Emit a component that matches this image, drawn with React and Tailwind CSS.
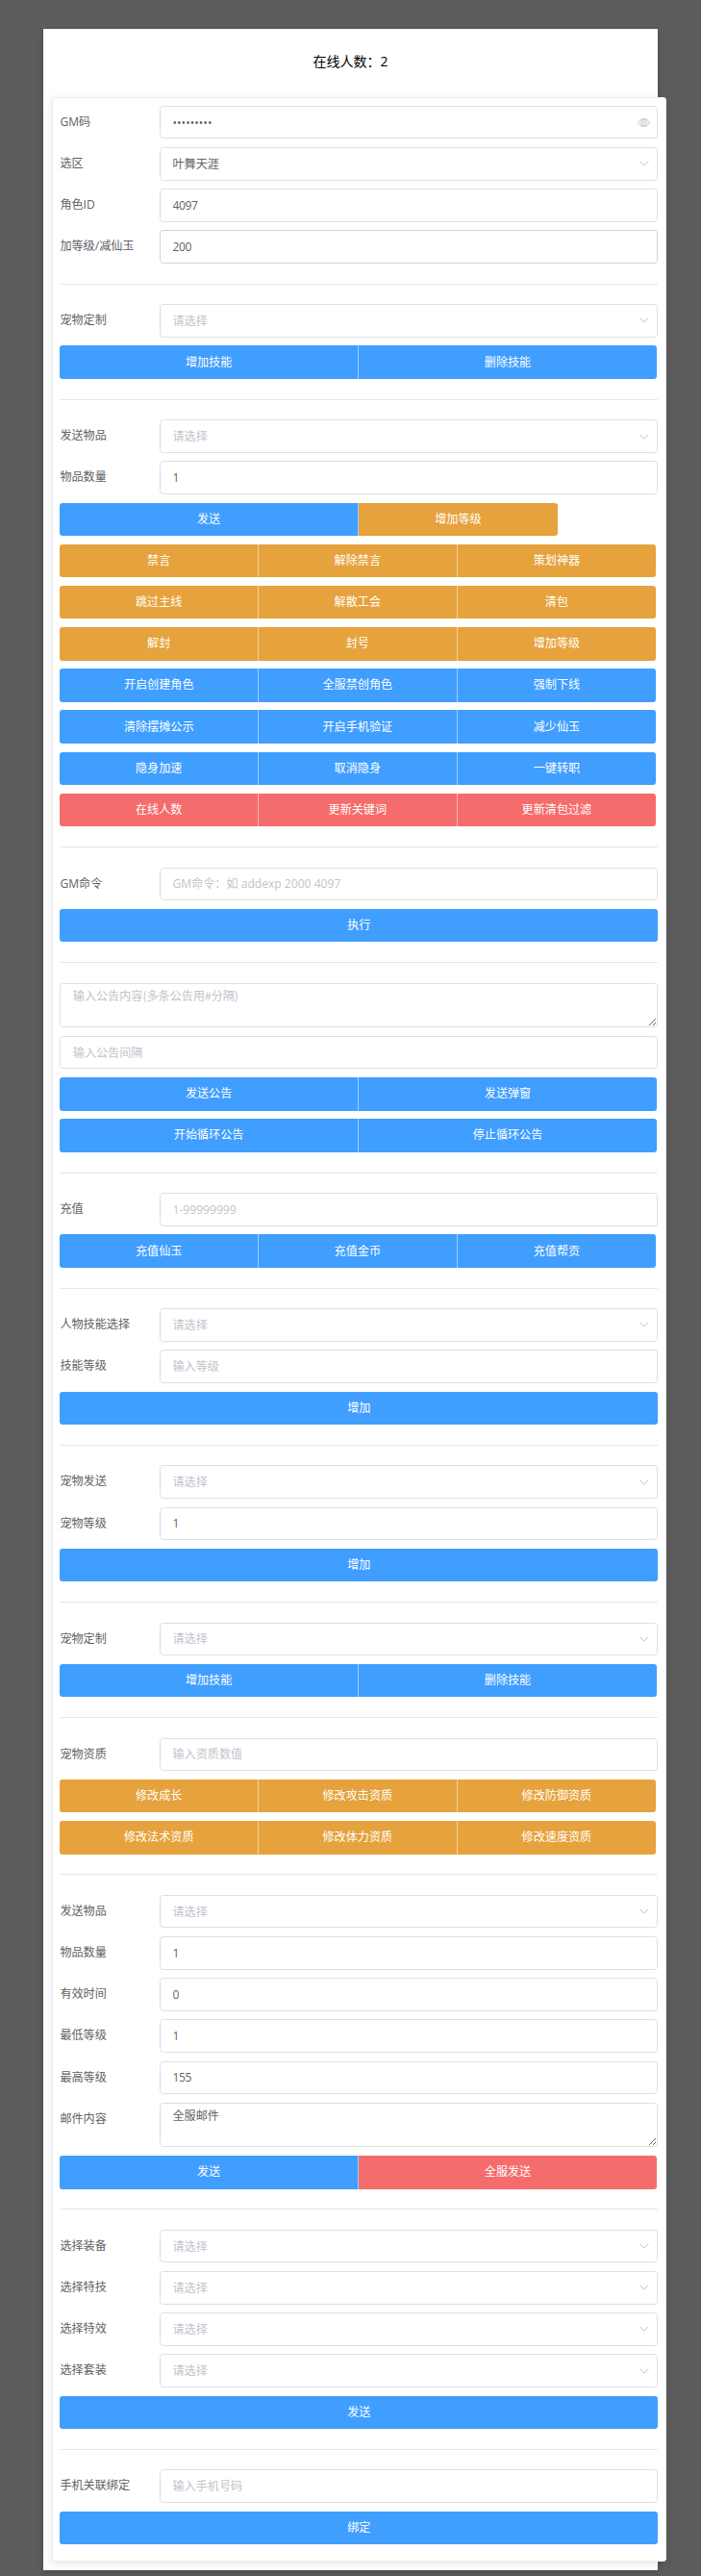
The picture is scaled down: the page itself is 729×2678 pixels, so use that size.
import { useState } from 'react';

const servers = '叶舞天涯';

const sections = [
  [
    { type: 'password', label: 'GM码', value: '123456789' },
    { type: 'select', label: '选区', value: servers },
    { type: 'input', label: '角色ID', value: '4097' },
    { type: 'input', label: '加等级/减仙玉', value: '200', active: true },
  ],
  [
    { type: 'select', label: '宠物定制' },
    { type: 'buttons', color: 'primary', items: ['增加技能', '删除技能'] },
  ],
  [
    { type: 'select', label: '发送物品' },
    { type: 'input', label: '物品数量', value: '1' },
    { type: 'send' },
    { type: 'buttons', color: 'warning', items: ['禁言', '解除禁言', '策划神器'] },
    { type: 'buttons', color: 'warning', items: ['跳过主线', '解散工会', '清包'] },
    { type: 'buttons', color: 'warning', items: ['解封', '封号', '增加等级'] },
    { type: 'buttons', color: 'primary', items: ['开启创建角色', '全服禁创角色', '强制下线'] },
    { type: 'buttons', color: 'primary', items: ['清除摆摊公示', '开启手机验证', '减少仙玉'] },
    { type: 'buttons', color: 'primary', items: ['隐身加速', '取消隐身', '一键转职'] },
    { type: 'buttons', color: 'danger', items: ['在线人数', '更新关键词', '更新清包过滤'] },
  ],
  [
    { type: 'input', label: 'GM命令', placeholder: 'GM命令：如 addexp 2000 4097' },
    { type: 'buttons', color: 'primary', items: ['执行'] },
  ],
  [
    { type: 'textarea', placeholder: '输入公告内容(多条公告用#分隔)' },
    { type: 'input', placeholder: '输入公告间隔' },
    { type: 'buttons', color: 'primary', items: ['发送公告', '发送弹窗'] },
    { type: 'buttons', color: 'primary', items: ['开始循环公告', '停止循环公告'] },
  ],
  [
    { type: 'input', label: '充值', placeholder: '1-99999999' },
    { type: 'buttons', color: 'primary', items: ['充值仙玉', '充值金币', '充值帮贡'] },
  ],
  [
    { type: 'select', label: '人物技能选择' },
    { type: 'input', label: '技能等级', placeholder: '输入等级' },
    { type: 'buttons', color: 'primary', items: ['增加'] },
  ],
  [
    { type: 'select', label: '宠物发送' },
    { type: 'input', label: '宠物等级', value: '1' },
    { type: 'buttons', color: 'primary', items: ['增加'] },
  ],
  [
    { type: 'select', label: '宠物定制' },
    { type: 'buttons', color: 'primary', items: ['增加技能', '删除技能'] },
  ],
  [
    { type: 'input', label: '宠物资质', placeholder: '输入资质数值' },
    { type: 'buttons', color: 'warning', items: ['修改成长', '修改攻击资质', '修改防御资质'] },
    { type: 'buttons', color: 'warning', items: ['修改法术资质', '修改体力资质', '修改速度资质'] },
  ],
  [
    { type: 'select', label: '发送物品' },
    { type: 'input', label: '物品数量', value: '1' },
    { type: 'input', label: '有效时间', value: '0' },
    { type: 'input', label: '最低等级', value: '1' },
    { type: 'input', label: '最高等级', value: '155' },
    { type: 'textarea', label: '邮件内容', value: '全服邮件' },
    { type: 'mail' },
  ],
  [
    { type: 'select', label: '选择装备' },
    { type: 'select', label: '选择特技' },
    { type: 'select', label: '选择特效' },
    { type: 'select', label: '选择套装' },
    { type: 'buttons', color: 'primary', items: ['发送'] },
  ],
  [
    { type: 'input', label: '手机关联绑定', placeholder: '输入手机号码' },
    { type: 'buttons', color: 'primary', items: ['绑定'] },
  ],
];

const colors = {
  primary: 'bg-[#409eff]',
  warning: 'bg-[#e6a23c]',
  danger: 'bg-[#f56c6c]',
};

const widths = {
  1: 'w-full',
  2: 'w-[310.4px]',
  3: 'w-[206.6px]',
};

function Button({ color, width, children }) {
  return (
    <button
      type="button"
      className={`${colors[color]} ${width} h-full shrink-0 border-r border-white/50 text-white first:rounded-l-[3px] last:rounded-r-[3px] last:border-r-0`}
    >
      {children}
    </button>
  );
}

function EyeIcon() {
  return (
    <svg viewBox="0 0 24 24" className="size-[13px]" fill="none" stroke="#c0c4cc" strokeWidth="1.8">
      <path d="M1.2 12C3.5 7.2 7.4 4.6 12 4.6S20.500 7.2 22.800 12C20.500 16.800 16.600 19.400 12 19.400S3.500 16.800 1.200 12Z" />
      <circle cx="12" cy="12" r="5.600" />
      <circle cx="12" cy="12" r="2.600" />
    </svg>
  );
}

function ArrowIcon() {
  return (
    <svg viewBox="0 0 12 12" className="size-3" fill="none" stroke="#c0c4cc" strokeWidth="1">
      <path d="M1.600 3.600L6 8.200L10.400 3.600" />
    </svg>
  );
}

function Field({ field }) {
  const [value, setValue] = useState(field.value || '');
  const isSelect = field.type === 'select';
  const border = field.active ? 'border-[#c9d5e3]' : 'border-[#dcdfe6]';
  const box = `block w-full rounded-[3.5px] border ${border} bg-white px-[12.4px] text-[#606266] outline-none placeholder:text-[#c0c4cc]`;
  const onChange = (e) => setValue(e.target.value);

  if (field.type === 'textarea') {
    return (
      <textarea
        className={`${box} h-[46.6px] resize-y py-[3px] font-['Noto_Sans_CJK_SC',sans-serif] leading-[18px]`}
        placeholder={field.placeholder}
        value={value}
        onChange={onChange}
      />
    );
  }

  return (
    <div className="relative">
      <input
        type={field.type === 'password' ? 'password' : 'text'}
        readOnly={isSelect}
        className={`${box} h-[34.56px] ${/^\d+$/.test(value) && field.type === 'input' ? 'tracking-[-0.4px]' : ''}`}
        placeholder={isSelect ? '请选择' : field.placeholder}
        value={value}
        onChange={onChange}
      />
      {(isSelect || field.type === 'password') && (
        <span className="pointer-events-none absolute inset-y-0 right-2 flex w-[13px] items-center justify-center">
          {isSelect ? <ArrowIcon /> : <EyeIcon />}
        </span>
      )}
    </div>
  );
}

function Row({ row }) {
  if (row.type === 'buttons') {
    return (
      <div className="flex h-[34.56px]">
        {row.items.map((item) => (
          <Button key={item} color={row.color} width={widths[row.items.length]}>{item}</Button>
        ))}
      </div>
    );
  }
  if (row.type === 'send') {
    return (
      <div className="flex h-[34.56px]">
        <Button color="primary" width="w-[310.4px]">发送</Button>
        <Button color="warning" width="w-[207.2px]">增加等级</Button>
      </div>
    );
  }
  if (row.type === 'mail') {
    return (
      <div className="flex h-[34.56px]">
        <Button color="primary" width="w-[310.4px]">发送</Button>
        <Button color="danger" width="w-[310.4px]">全服发送</Button>
      </div>
    );
  }
  return (
    <div className="flex">
      {row.label && (
        <label className="w-[103.7px] shrink-0 leading-[34.5px] text-[#606266]">{row.label}</label>
      )}
      <div className="flex-1">
        <Field field={row} />
      </div>
    </div>
  );
}

export default function App() {
  return (
    <div className="h-[2678px] overflow-hidden bg-[#5c5c5c] pt-[30px] pl-[45px] font-['Open_Sans','Noto_Sans_CJK_SC',sans-serif] text-[12.1px]">
      <div className="h-[2642px] w-[639px] border-t border-[#ebeef5] bg-white shadow-[0_2px_6px_rgba(0,0,0,0.2)]">
        <h1 className="h-[70px] text-center text-[14px] leading-[66px] text-black">在线人数：2</h1>

        <div className="ml-[8.64px] h-[2562px] w-[639.4px] rounded-[3px] border border-[#ebeef5] bg-white px-[7.8px] pt-[7.8px] shadow-[0_2px_10px_rgba(0,0,0,0.1)]">
          {sections.map((rows, i) => (
            <div key={i}>
              {/* Divider between groups */}
              {i > 0 && <div className="my-[20.74px] h-[0.86px] bg-[#e4e7ed]" />}
              <div className="flex flex-col gap-[8.64px]">
                {rows.map((row, j) => (
                  <Row key={j} row={row} />
                ))}
              </div>
            </div>
          ))}
        </div>
      </div>
    </div>
  );
}
